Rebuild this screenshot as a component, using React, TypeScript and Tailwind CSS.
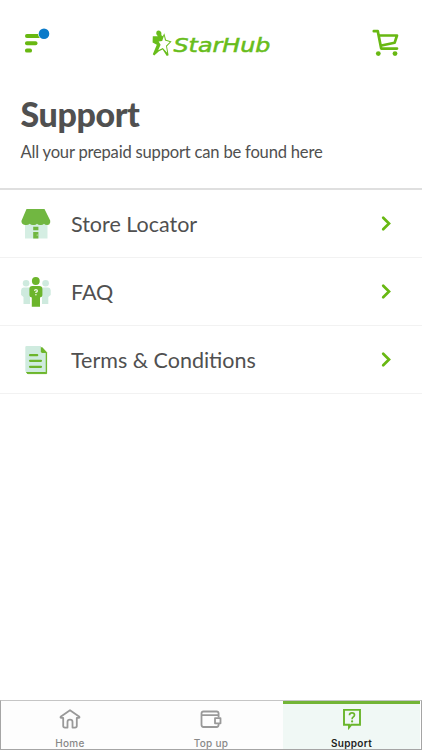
import { ReactNode, useState } from 'react'
import clsx from 'clsx'

const MenuIcon = () => (
    <svg width="30" height="30" viewBox="0 0 30 30" fill="#68b812">
        <rect x="2" y="7" width="17" height="4" rx="1.9" />
        <rect x="2" y="14.2" width="12.5" height="4" rx="1.9" />
        <rect x="2" y="21.4" width="7" height="4.2" rx="1.9" />
        <circle cx="21" cy="6.8" r="5.9" fill="#fff" />
        <circle cx="21" cy="6.8" r="5.3" fill="#0b7bc9" />
    </svg>
)

const Logo = () => (
    <svg width="120" height="30" viewBox="0 0 120 30" fill="#68bd1b">
        <path d="M4.4 2.8Q6 .8 8.2 2Q10 3.2 9.4 6.2L10.8 7.2L12.3 4.3L14 10.8L19.6 12.4L15 17.2L16.6 26.3L14.8 27L10.6 20.6L7 22.2L2.2 26.6L.8 25.2L4.8 15.8L.6 13.6L.8 7.2L5.8 7.2Q3.4 5.2 4.4 2.8Z" />
        <path d="M12 6.8L13 11.6L17.8 13L14 16.8L15.2 23.8L10.8 19L6.2 21.2L8.6 15.8L6.6 12.6L10.2 12Z" fill="#fff" />
        <text x="21.5" y="22.9" fontFamily="DejaVu Sans, sans-serif" fontSize="19" fontStyle="italic" textLength="97" lengthAdjust="spacingAndGlyphs" stroke="#68bd1b" strokeWidth=".5">StarHub</text>
    </svg>
)

const CartIcon = () => (
    <svg width="28" height="28" viewBox="0 0 28 28" fill="none" stroke="#68b812" strokeWidth="2.7" strokeLinejoin="round">
        <path d="M1.8 2.2H5.8L9.2 19.6H25" strokeLinecap="round" />
        <path d="M6.7 6.5H25L22.6 13.8L8.3 16.8" />
        <circle cx="6.3" cy="24.6" r="2.4" fill="#68b812" stroke="none" />
        <circle cx="23" cy="24.6" r="2.4" fill="#68b812" stroke="none" />
    </svg>
)

const StoreIcon = () => (
    <svg width="32" height="32" viewBox="0 0 32 32">
        <path d="M5 14H27.5V30.5H5Z" fill="#d5eee3" />
        <path d="M6.5 1H24.5L30.2 12.5V14.5Q29.5 17.3 27 17Q25 17 24 15.7Q22.5 17.5 20 17Q18.2 17 17 15.7Q15.5 17.5 13 17Q11 17 9.7 15.7Q8 17.5 5 17Q1.4 16.5 1.4 13Z" fill="#71b741" />
        <path d="M13.2 18.8H18.4V22.3H13.2ZM13.2 24H18.4V30.5H13.2Z" fill="#71b741" />
        <circle cx="17.2" cy="27" r=".6" fill="#d5eee3" />
    </svg>
)

const PeopleIcon = () => (
    <svg width="32" height="32" viewBox="0 0 32 32">
        <g fill="#ceeade">
            <circle cx="6.1" cy="7.2" r="3.3" />
            <circle cx="25.6" cy="7.2" r="3.3" />
            <path d="M3.5 11.6H10V28H3.5V21L1.1 19V14.3Q1.3 11.6 3.5 11.6Z" />
            <path d="M22 11.6H28.3Q30.5 11.6 30.7 14.3V19L28.3 21V28H22Z" />
        </g>
        <g fill="#6cb52b">
            <circle cx="15.8" cy="5" r="3.9" />
            <path d="M12.3 10.1H19.3Q22.4 10.3 22.4 13.1V19.3Q22.4 21 20 21.5V30.7H11.8V21.5Q9.4 21 9.4 19.3V13.1Q9.4 10.3 12.3 10.1Z" />
        </g>
        <path d="M14.5 14.9Q14.6 13.6 15.9 13.6Q17.4 13.6 17.4 14.9Q17.3 15.8 15.9 16.3V17.1" fill="none" stroke="#eff9e8" strokeWidth="1.3" />
        <circle cx="15.9" cy="18.8" r=".8" fill="#eff9e8" />
    </svg>
)

const DocumentIcon = () => (
    <svg width="32" height="32" viewBox="0 0 32 32">
        <path d="M22 3.5L26.6 8.4V29.6H8Q7 29.6 6.5 28.5H25.4V8.4H22Z" fill="#6cb52b" stroke="#6cb52b" strokeWidth="1" strokeLinejoin="round" />
        <path d="M6.5 2H21V9H25.7V28H6.5Q5.3 28 5.3 26.8V3.2Q5.3 2 6.5 2Z" fill="#cfebdf" />
        <path d="M20.8 2.7L26.8 8.7H22Q20.8 8.7 20.8 7.7Z" fill="#6cb52b" />
        <path d="M10 11.2H17.2M10 16.8H21M10 22.8H21" stroke="#6cb52b" strokeWidth="2.2" strokeLinecap="round" />
    </svg>
)

const HomeIcon = () => (
    <svg width="22" height="22" viewBox="0 0 22 22" fill="none" stroke="#999" strokeWidth="1.8" strokeLinejoin="round" strokeLinecap="round">
        <path d="M11 2.2L20 8.4Q21.2 9.7 19.5 9.9H17.8V17.8Q17.8 19.6 16 19.6H13.5V13.7Q13.5 11.6 11 11.6Q8.5 11.6 8.5 13.7V19.6H6Q4.2 19.6 4.2 17.8V9.9H2.5Q.8 9.7 2 8.4Z" />
    </svg>
)

const WalletIcon = () => (
    <svg width="22" height="22" viewBox="0 0 22 22" fill="none" stroke="#999" strokeWidth="1.8" strokeLinejoin="round">
        <path d="M18.6 9.5V5.5Q18.6 3.5 16.6 3.5H3.5Q1.5 3.5 1.5 5.5V16.8Q1.5 19 3.5 19H16.6Q18.6 19 18.6 16.8V15.4M1.5 7.1H18.6" />
        <path d="M15 10.2H20.5V15.3H15Z" />
    </svg>
)

const SupportIcon = () => (
    <svg width="22" height="22" viewBox="0 0 22 22" fill="none" stroke="#69b52b" strokeWidth="1.9">
        <path d="M3 1.9H19V16.8H10.2L8 19.5V16.8H3Z" />
        <path d="M8.5 7.2Q8.5 4.9 11 4.9Q13.5 4.9 13.5 7Q13.5 8.2 12.2 9Q11.1 9.6 11.1 11.2" strokeWidth="1.7" />
        <circle cx="11.1" cy="13.4" r="1.1" fill="#69b52b" stroke="none" />
    </svg>
)

const LINKS = [
    { label: 'Store Locator', icon: <StoreIcon /> },
    { label: 'FAQ', icon: <PeopleIcon /> },
    { label: 'Terms & Conditions', icon: <DocumentIcon /> },
]

const TABS = [
    { label: 'Home', icon: <HomeIcon /> },
    { label: 'Top up', icon: <WalletIcon /> },
    { label: 'Support', icon: <SupportIcon /> },
]

const LinkRow = ({ label, icon }: { label: string, icon: ReactNode }) => (
    <button className="flex h-[68px] w-full items-center border-b border-[#f2f2f2] pl-5 pr-[29px] text-left">
        {icon}
        <span className="ml-[19px] flex-1 pt-px text-[21.5px] leading-7 text-[#505050]">{label}</span>
        <svg width="14" height="18" viewBox="0 0 14 18" fill="none" stroke="#68b812" strokeWidth="2.7">
            <path d="M4.2 2.8L10 8.5L4.2 14.2" strokeLinecap="round" strokeLinejoin="miter" />
        </svg>
    </button>
)

const App = () => {
    const [active, setActive] = useState('Support')

    return (
        <div className="flex h-screen w-full flex-col bg-white font-['Lato',sans-serif] text-[#505050]">
            <header className="flex h-[84px] items-start justify-between pl-[23px] pr-[22px] pt-[27px]">
                <button aria-label="Menu"><MenuIcon /></button>
                <div className="mr-0.5 mt-0.5"><Logo /></div>
                <button aria-label="Cart" className="mt-0.5"><CartIcon /></button>
            </header>

            <section className="h-[106px] border-b-2 border-[#dfdfdf] px-[21px] pt-2.5">
                <h1 className="-ml-[0.5px] text-[34px] font-black leading-10 tracking-[-0.4px]">Support</h1>
                <p className="-ml-[0.5px] mt-1.5 text-[16.6px] leading-6 tracking-[-0.21px]">All your prepaid support can be found here</p>
            </section>

            <main className="flex-1">
                {LINKS.map((link) => <LinkRow key={link.label} label={link.label} icon={link.icon} />)}
            </main>

            <nav className="grid h-[50px] grid-cols-[141px_141px_1fr] border border-[#a5a5a5] border-t-[#c5c5c5] font-['Inter',sans-serif]">
                {TABS.map((tab) => (
                    <button
                        key={tab.label}
                        onClick={() => setActive(tab.label)}
                        className={clsx(
                            'flex flex-col items-center overflow-hidden text-[10px] leading-3',
                            active === tab.label
                                ? 'mr-px border-t-[3px] border-[#72b536] bg-[#f0f8f5] pt-1 font-semibold text-[#222]'
                                : 'bg-[#fdfdfd] pr-[3px] pt-[7px] font-medium text-[#888]'
                        )}
                    >
                        {tab.icon}
                        <span className="mt-[7px] tracking-[0.3px]">{tab.label}</span>
                    </button>
                ))}
            </nav>
        </div>
    )
}

export default App
